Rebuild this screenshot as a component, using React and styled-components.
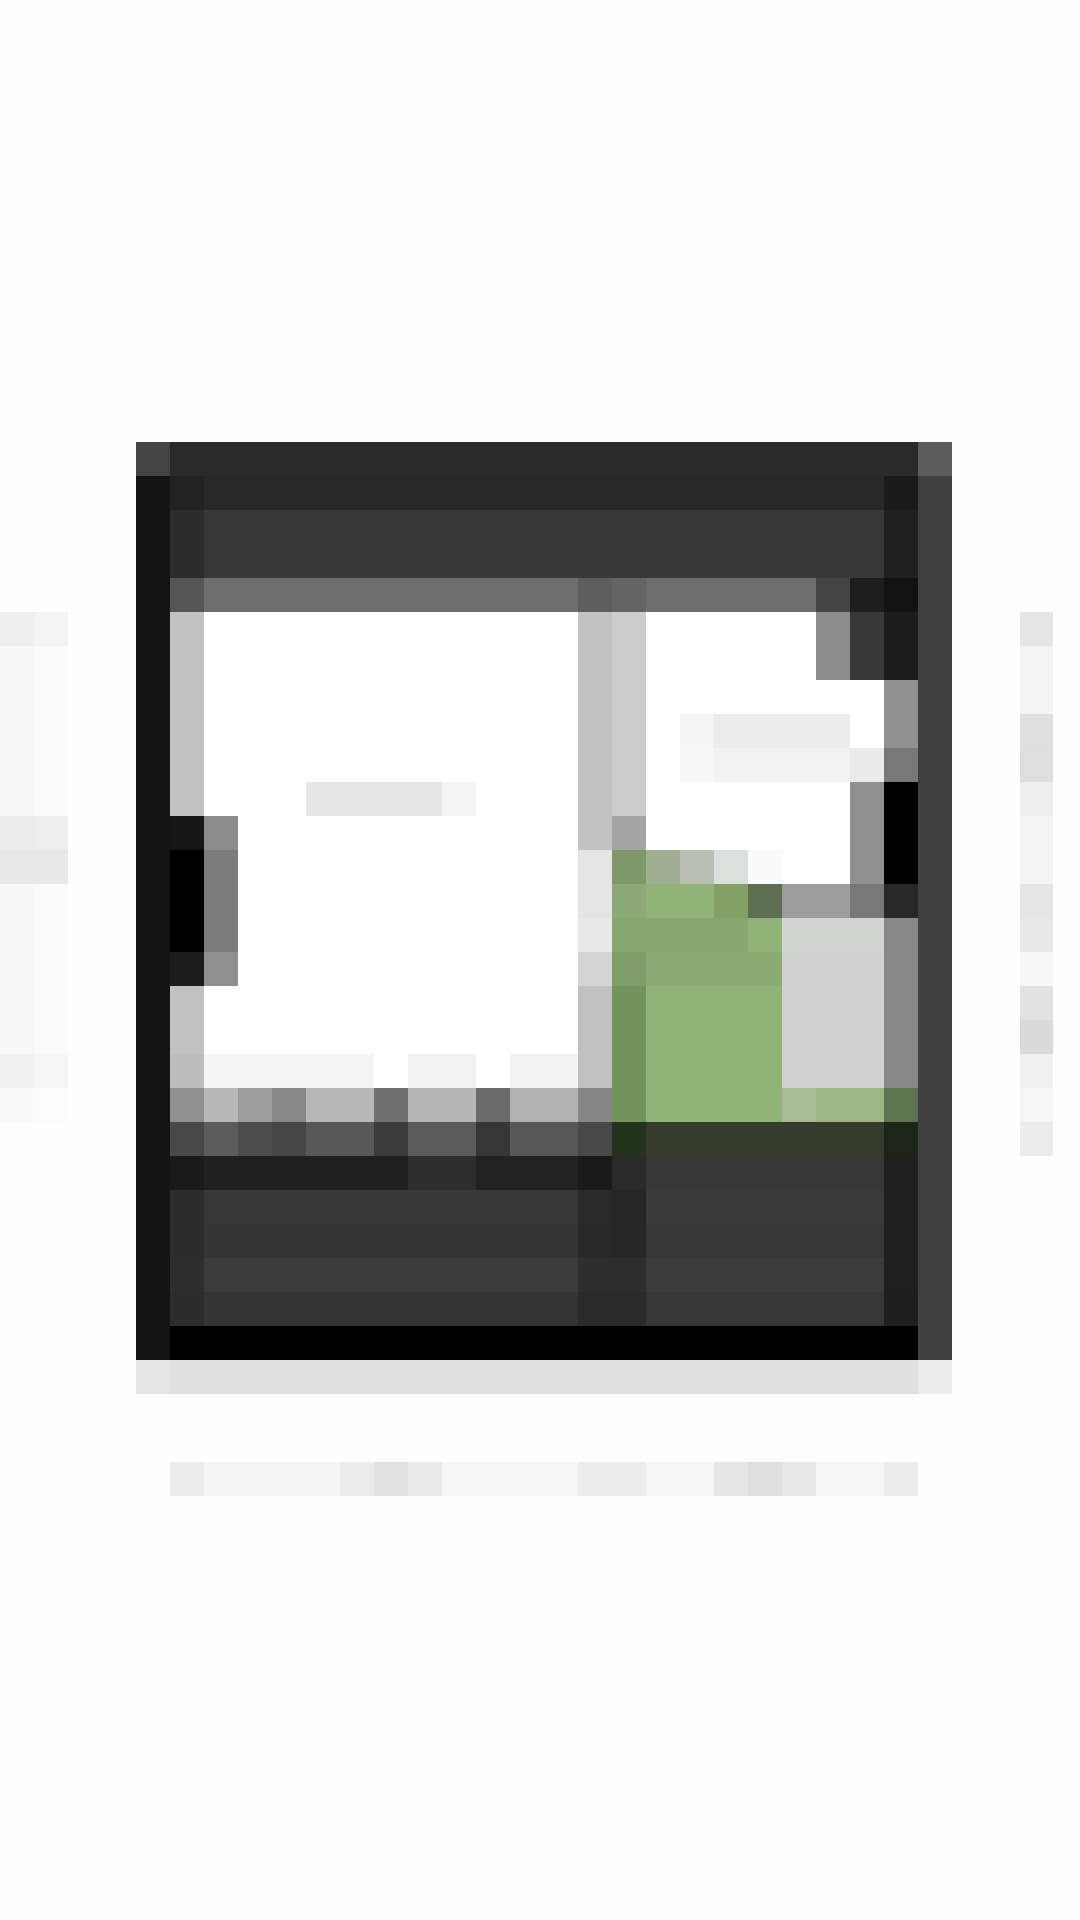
import styled, { createGlobalStyle } from "styled-components";

const CELL = 34;

const GlobalStyle = createGlobalStyle`
  html, body {
    margin: 0;
    background: #fefefe;
    font-family: "Liberation Sans", sans-serif;
  }
`;

const Page = styled.div`
  display: flex;
  align-items: flex-start;
  gap: ${CELL * 2}px;
  width: 1080px;
  height: 1920px;
  padding-top: 442px;
  box-sizing: border-box;
  overflow: hidden;
`;

const PeekLeft = styled.div`
  width: ${CELL * 2}px;
  flex: none;
  margin-top: ${CELL * 5}px;
`;

const PeekRight = styled.div`
  width: 33px;
  flex: none;
  margin-top: ${CELL * 5}px;
`;

const Device = styled.div`
  width: ${CELL * 24}px;
  flex: none;
`;

const Section = styled.section`
  display: flex;
  flex-direction: column;
`;

const Caption = styled.div`
  display: flex;
  height: ${CELL}px;
  margin: ${CELL * 2}px 0 0 ${CELL}px;
`;

const Row = styled.div`
  display: flex;
  height: ${(p) => p.$h || CELL}px;
`;

const Tile = styled.div`
  width: ${(p) => p.$n * CELL}px;
  flex: none;
  background: ${(p) => p.$tone};
`;

const PeekTile = styled.div`
  flex: 1;
  background: ${(p) => p.$tone};
`;

const topBar = [
  "1 444444,22 2a2a2a,1 5c5c5c",
  "1 141414,1 222222,20 282828,1 1a1a1a,1 404040",
  "1 141414,1 2c2c2c,20 383838,1 202020,1 404040",
  "1 141414,1 2c2c2c,20 383838,1 202020,1 404040",
  "1 141414,1 555555,11 6e6e6e,1 5e5e5e,1 646464,5 6e6e6e,1 444444,1 1e1e1e,1 121212,1 404040",
];

const screen = [
  "1 141414,1 c2c2c2,11 ffffff,1 c2c2c2,1 cccccc,5 ffffff,1 8c8c8c,1 383838,1 1c1c1c,1 404040",
  "1 141414,1 c2c2c2,11 ffffff,1 c2c2c2,1 cccccc,5 ffffff,1 8c8c8c,1 383838,1 1c1c1c,1 404040",
  "1 141414,1 c2c2c2,11 ffffff,1 c2c2c2,1 cccccc,7 ffffff,1 909090,1 404040",
  "1 141414,1 c2c2c2,11 ffffff,1 c2c2c2,1 cccccc,1 ffffff,1 f5f5f5,4 ececec,1 ffffff,1 909090,1 404040",
  "1 141414,1 c2c2c2,11 ffffff,1 c2c2c2,1 cccccc,1 ffffff,1 f8f8f8,4 f2f2f2,1 eaeaea,1 787878,1 404040",
  "1 141414,1 c2c2c2,3 ffffff,4 e6e6e6,1 f4f4f4,3 ffffff,1 c2c2c2,1 cccccc,6 ffffff,1 909090,1 000000,1 404040",
  "1 141414,1 161616,1 8c8c8c,10 ffffff,1 c2c2c2,1 a4a4a4,6 ffffff,1 909090,1 000000,1 404040",
  "1 141414,1 000000,1 7c7c7c,10 ffffff,1 e4e4e4,1 7f9868,1 a0ae94,1 b8c0b4,1 dce0dc,1 fafafa,2 ffffff,1 909090,1 000000,1 404040",
  "1 141414,1 000000,1 7c7c7c,10 ffffff,1 e4e4e4,1 8ba876,2 90b478,1 82a066,1 5e6e50,2 9c9c9c,1 787878,1 282828,1 404040",
  "1 141414,1 000000,1 7c7c7c,10 ffffff,1 e8e8e8,4 87a56f,1 90b478,3 d2d4d2,1 888888,1 404040",
  "1 141414,1 1c1c1c,1 909090,10 ffffff,1 d4d4d4,1 7f9c68,4 8aa973,3 d0d0d0,1 888888,1 404040",
  "1 141414,1 c2c2c2,11 ffffff,1 c0c0c0,1 72935c,4 90b478,3 d0d0d0,1 888888,1 404040",
  "1 141414,1 c2c2c2,11 ffffff,1 c0c0c0,1 72935c,4 90b478,3 d0d0d0,1 888888,1 404040",
  "1 141414,1 bcbcbc,5 f4f4f4,1 ffffff,2 f2f2f2,1 ffffff,2 f2f2f2,1 c0c0c0,1 72935c,4 90b478,3 d0d0d0,1 888888,1 404040",
];

const dock = [
  "1 141414,1 909090,1 b8b8b8,1 9c9c9c,1 888888,2 b8b8b8,1 707070,2 b6b6b6,1 6a6a6a,2 b2b2b2,1 868686,1 72935c,4 90b478,1 a8bb92,2 9db884,1 5e7350,1 404040",
  "1 141414,1 484848,1 5c5c5c,1 4c4c4c,1 464646,2 585858,1 3c3c3c,2 5a5a5a,1 363636,2 585858,1 484848,1 24341c,7 363c2c,1 1c2618,1 404040",
  "1 141414,1 1a1a1a,6 202020,2 2e2e2e,3 222222,1 1a1a1a,1 2a2a2a,7 383838,1 202020,1 404040",
];

const footer = [
  "1 141414,1 2c2c2c,11 383838,1 2a2a2a,1 262626,7 3a3a3a,1 202020,1 404040",
  "1 141414,1 2c2c2c,11 343434,1 282828,1 262626,7 363636,1 202020,1 404040",
  "1 141414,1 2e2e2e,11 3c3c3c,1 2e2e2e,1 2e2e2e,7 3c3c3c,1 202020,1 404040",
  "1 141414,1 2c2c2c,11 343434,1 2a2a2a,1 2a2a2a,7 363636,1 1e1e1e,1 404040",
  "1 141414,22 000000,1 404040",
  "1 e4e4e4,22 e0e0e0,1 ececec",
];

const caption =
  "1 ececec,4 f4f4f4,1 ececec,1 e2e2e2,1 eaeaea,4 f6f6f6,2 ececec,2 f6f6f6,1 e6e6e6,1 e0e0e0,1 e8e8e8,2 f6f6f6,1 ececec";

const leftPeek = [
  [34, "eeeeee", "f4f4f4"],
  [170, "f8f8f8", "fbfbfb"],
  [34, "ececec", "eeeeee"],
  [34, "e8e8e8", "e8e8e8"],
  [170, "f8f8f8", "fbfbfb"],
  [34, "f0f0f0", "f6f6f6"],
  [34, "fafafa", "fcfcfc"],
];

const rightPeek = [
  [34, "e6e6e6"],
  [68, "f4f4f4"],
  [34, "e0e0e0"],
  [34, "dedede"],
  [34, "eeeeee"],
  [68, "f4f4f4"],
  [34, "e6e6e6"],
  [34, "e8e8e8"],
  [34, "f8f8f8"],
  [34, "e2e2e2"],
  [34, "dadada"],
  [34, "f0f0f0"],
  [34, "f6f6f6"],
  [34, "ececec"],
];

const Tiles = ({ spec }) =>
  spec.split(",").map((part, i) => {
    const [n, tone] = part.split(" ");
    return <Tile key={i} $n={Number(n)} $tone={`#${tone}`} />;
  });

const Rows = ({ list }) => (
  <Section>
    {list.map((spec, i) => (
      <Row key={i}>
        <Tiles spec={spec} />
      </Row>
    ))}
  </Section>
);

const Peek = ({ list }) =>
  list.map(([h, ...tones], i) => (
    <Row key={i} $h={h}>
      {tones.map((tone, j) => (
        <PeekTile key={j} $tone={`#${tone}`} />
      ))}
    </Row>
  ));

const App = () => (
  <Page>
    <GlobalStyle />
    <PeekLeft>
      <Peek list={leftPeek} />
    </PeekLeft>
    <Device>
      <Rows list={topBar} />
      <Rows list={screen} />
      <Rows list={dock} />
      <Rows list={footer} />
      <Caption>
        <Tiles spec={caption} />
      </Caption>
    </Device>
    <PeekRight>
      <Peek list={rightPeek} />
    </PeekRight>
  </Page>
);

export default App;
